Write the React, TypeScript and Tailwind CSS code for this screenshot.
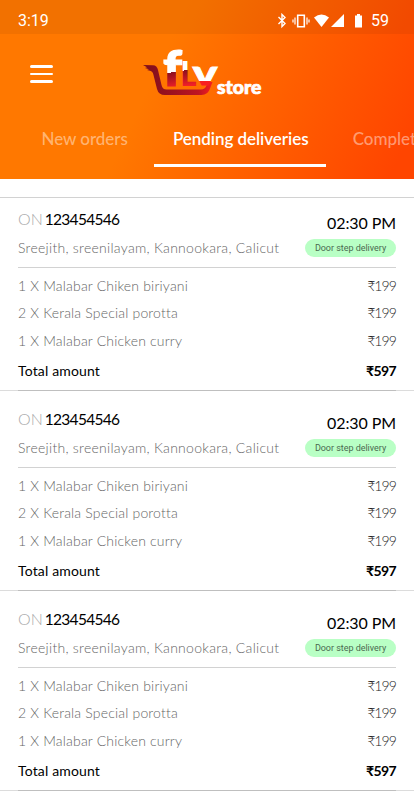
import type { ReactNode } from 'react'

type OrderItem = { name: string; price: string }

type Order = {
  id: number
  number: string
  time: string
  address: string
  delivery: string
  items: OrderItem[]
  total: string
}

const items: OrderItem[] = [
  { name: '1 X Malabar Chiken biriyani', price: '199' },
  { name: '2 X Kerala Special porotta', price: '199' },
  { name: '1 X Malabar Chicken curry', price: '199' },
]

const orders: Order[] = [1, 2, 3].map((id) => ({
  id,
  number: '123454546',
  time: '02:30 PM',
  address: 'Sreejith, sreenilayam, Kannookara, Calicut',
  delivery: 'Door step delivery',
  items,
  total: '597',
}))

function StatusBar() {
  return (
    <div className="flex h-[34px] items-center justify-between bg-black/5 pt-[7px] pr-[25px] pl-[18px] font-[Roboto,sans-serif] text-base text-white">
      <span>3:19</span>
      <div className="flex items-center">
        <svg width="86" height="16" viewBox="0 2 86 16" fill="none" stroke="white">
          <path d="M2.500 6 9 12.500l-3 3v-12l3 3L2.500 13" strokeWidth="1.4" />
          <path d="M21.700 4.200h6.600v11.600h-6.600z" strokeWidth="1.600" />
          <path d="M19 6.500v7M31 6.500v7M17 8.500v3M33 8.500v3" strokeWidth="1.2" />
          <path d="M38 6.500q7.500-6 15 0L45.500 16z" fill="white" stroke="none" />
          <path d="M68 3v13H55z" fill="white" stroke="none" />
          <path d="M79 4.500h2V3h3v1.500h2v12h-7z" fill="white" stroke="none" />
        </svg>
        <span className="ml-[9px]">59</span>
      </div>
    </div>
  )
}

function Logo() {
  return (
    <svg width="122" height="54" viewBox="140 46 122 54" className="overflow-visible font-[Lato,sans-serif]">
      <defs>
        <linearGradient id="hull" x1="0" x2="1">
          <stop offset="0" stopColor="#7d0f1c" />
          <stop offset="0.45" stopColor="#a01220" />
          <stop offset="0.8" stopColor="#c01522" />
          <stop offset="1" stopColor="#f82020" />
        </linearGradient>
        <linearGradient id="stem" gradientUnits="userSpaceOnUse" x1="172" y1="49" x2="178" y2="87">
          <stop offset="0.6" stopColor="#fff" />
          <stop offset="0.6" stopColor="#8c1020" />
          <stop offset="1" stopColor="#f02028" />
        </linearGradient>
        <linearGradient id="sail" gradientUnits="userSpaceOnUse" x1="0" y1="66" x2="0" y2="86">
          <stop offset="0.75" stopColor="#fff" />
          <stop offset="0.75" stopColor="#f82020" />
        </linearGradient>
      </defs>
      <path
        d="M143 65l10 .3q4 .2 5 4.700l3.500 15q1 4.500 5 4.500H201q4 0 5.500-4l1.500-3.500h4.500L210 88.500q-2 6.500-8.500 6.500H165q-6.500 0-8-6l-3.500-14q-.8-4-3.500-4.300l-3-.7 2-.7-4-1.200 2-.8z"
        fill="url(#hull)"
      />
      <g fontWeight="900">
        <text x="163" y="86" fontSize="49" fill="url(#stem)" stroke="url(#stem)" strokeWidth="1.2" textLength="19" lengthAdjust="spacingAndGlyphs">
          f
        </text>
        <text x="180.500" y="86" fontSize="34" fill="url(#stem)" textLength="16" lengthAdjust="spacingAndGlyphs">
          L
        </text>
        <text x="192.500" y="84.500" fontSize="34" fill="url(#sail)" stroke="url(#sail)" strokeWidth="0.8" textLength="25" lengthAdjust="spacingAndGlyphs">
          v
        </text>
        <text x="217" y="93.500" fontSize="18" fill="#fff" stroke="#fff" strokeWidth="0.7" textLength="44.500" lengthAdjust="spacingAndGlyphs">
          store
        </text>
      </g>
    </svg>
  )
}

function Tab({ active, children }: { active?: boolean; children: ReactNode }) {
  return (
    <span
      className={
        active
          ? 'w-[172px] shrink-0 border-b-[3px] border-white pl-[2px] text-center font-semibold text-white'
          : 'shrink-0 font-medium text-white/45'
      }
    >
      {children}
    </span>
  )
}

function Header() {
  return (
    <header className="h-[179px] overflow-hidden bg-linear-[115deg,#ff7800_38%,#ff4500_95%]">
      <StatusBar />
      <div className="flex h-[70px] items-start pt-3">
        <button aria-label="Menu" className="mt-[19px] ml-[30px] flex w-[23px] flex-col gap-[5px]">
          <span className="h-[2.500px] rounded-full bg-white" />
          <span className="h-[2.500px] rounded-full bg-white" />
          <span className="h-[2.500px] rounded-full bg-white" />
        </button>
        <div className="ml-[87px]">
          <Logo />
        </div>
      </div>
      <nav className="mt-6 flex h-[39px] pl-[41.500px] text-[17px] leading-[22px] tracking-[-0.05px] whitespace-nowrap">
        <Tab>New orders</Tab>
        <span className="w-[26px] shrink-0" />
        <Tab active>Pending deliveries</Tab>
        <span className="w-[27px] shrink-0" />
        <Tab>Completed</Tab>
      </nav>
    </header>
  )
}

function OrderCard({ order }: { order: Order }) {
  return (
    <article className="border-b border-[#dcdcdc] pt-[17px] first:pt-[10px]">
      <div className="mx-[18px] flex h-[60px] justify-between border-b border-[#d2d2d2]">
        <div>
          <p className="-mt-px text-base leading-6 text-black">
            <span className="font-light text-[#aaa]">ON</span>
            <span className="ml-[2px] text-[15.500px] tracking-[-0.7px]">{order.number}</span>
          </p>
          <p className="mt-[5px] text-sm leading-6 font-light tracking-[0.28px] whitespace-nowrap text-[#666]">
            {order.address}
          </p>
        </div>
        <div className="flex flex-col items-end">
          <p className="mt-[3px] text-base leading-6 tracking-[-0.1px] text-black">{order.time}</p>
          <span className="mt-1 flex h-[18px] w-[91px] items-center justify-center rounded-full bg-[#b9ffc5] pt-px font-[Roboto,sans-serif] text-[9px] tracking-[-0.03px] whitespace-nowrap text-[#4a6a50]">
            {order.delivery}
          </span>
        </div>
      </div>
      <ul className="mx-[18px] pt-[3.500px] text-sm leading-[27.500px] font-light text-[#666]">
        {order.items.map((item) => (
          <li key={item.name} className="flex justify-between">
            <span className="tracking-[0.18px]">{item.name}</span>
            <span className="tracking-[-0.9px] text-[#222]">₹{item.price}</span>
          </li>
        ))}
      </ul>
      <div className="mx-[18px] -mb-px flex h-[37px] justify-between border-b border-[#bfbfbf] text-sm leading-[33px] text-black">
        <span className="tracking-[0.15px]">Total amount</span>
        <span className="font-bold tracking-[-0.6px]">₹{order.total}</span>
      </div>
    </article>
  )
}

export default function App() {
  return (
    <div className="h-[800px] w-[414px] overflow-hidden bg-white font-[Lato,sans-serif]">
      <Header />
      <main className="mt-[18px] border-t border-[#d2d2d2]">
        {orders.map((order) => (
          <OrderCard key={order.id} order={order} />
        ))}
      </main>
    </div>
  )
}
